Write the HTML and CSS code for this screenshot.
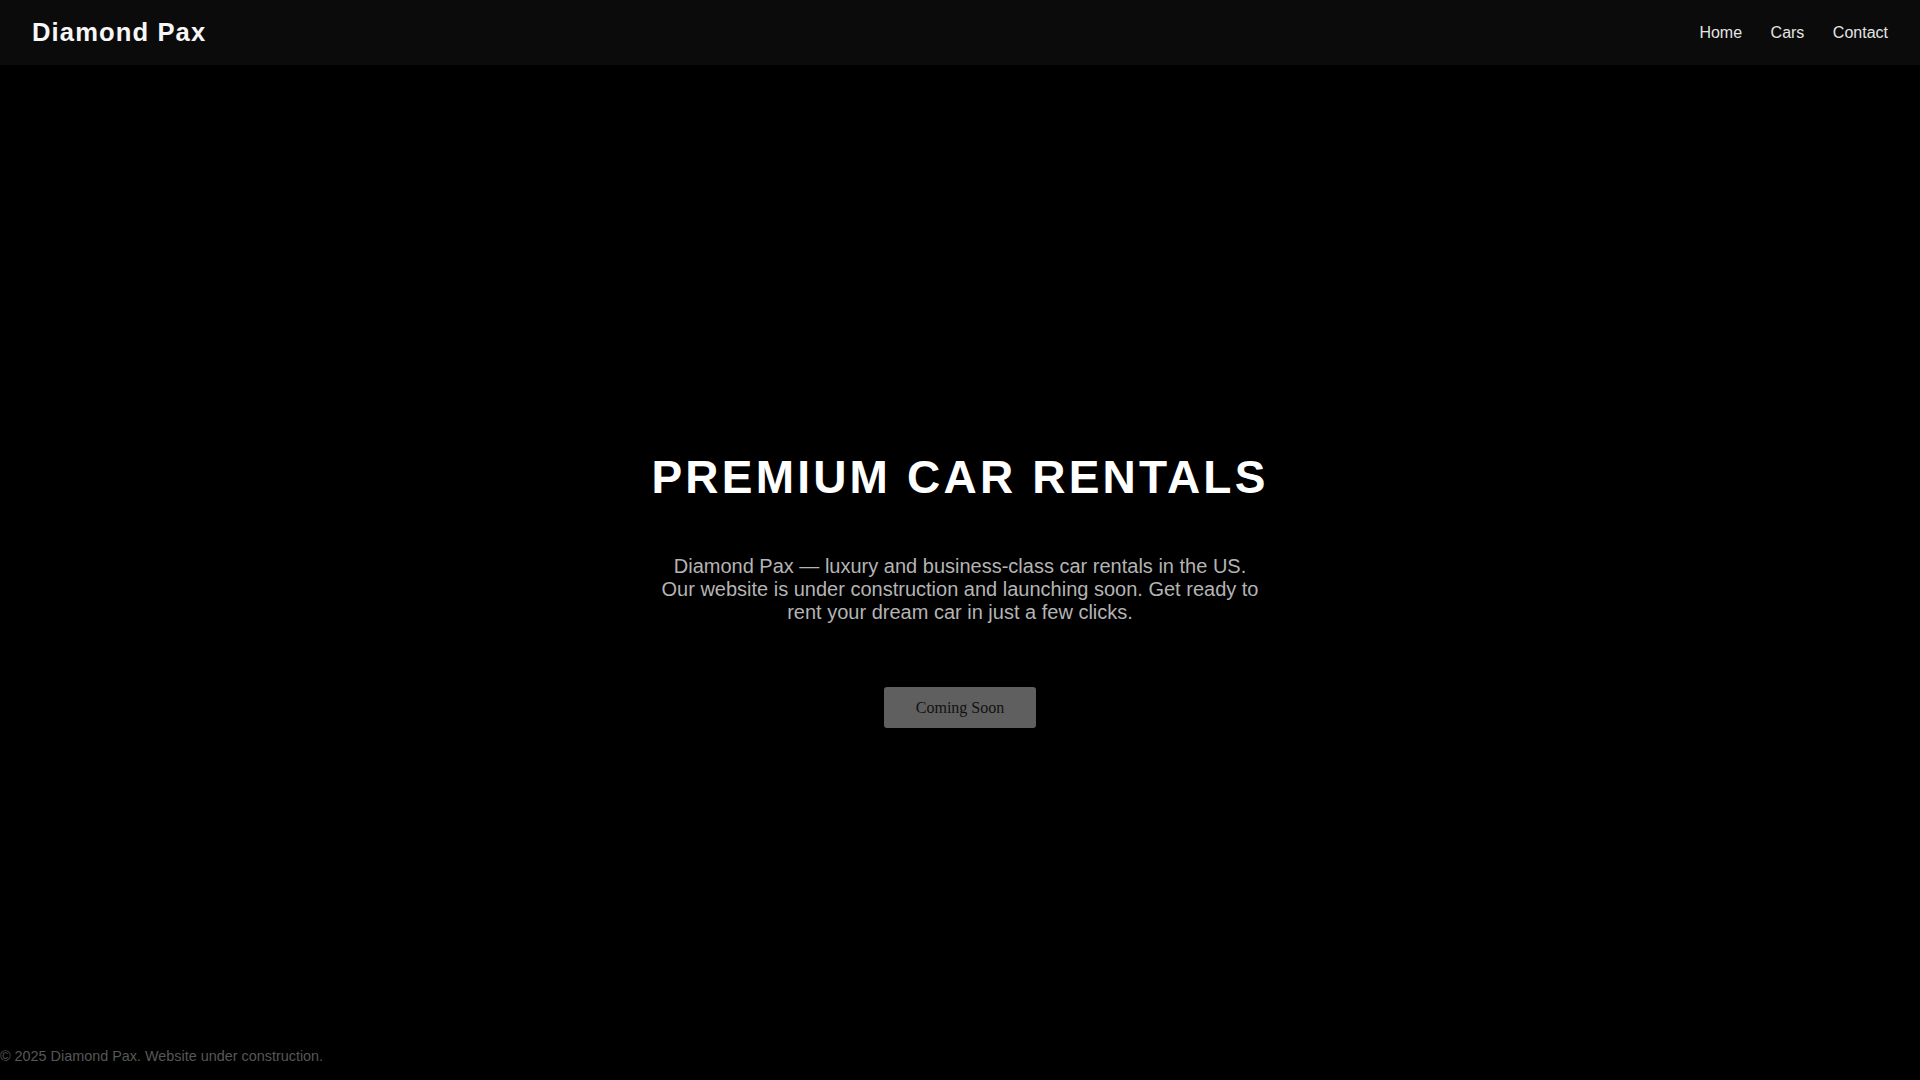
FILE: index.html
```html
<!DOCTYPE html>
<html lang="en">
<head>
<meta charset="utf-8">
<title>Diamond Pax — Premium Car Rentals</title>
<link rel="stylesheet" href="styles.css">
</head>
<body>
  <header class="site-header">
    <div class="logo">Diamond Pax</div>
    <nav class="nav">
      <a href="#" class="nav-link">Home</a>
      <a href="#" class="nav-link">Cars</a>
      <a href="#" class="nav-link">Contact</a>
    </nav>
  </header>
  <main class="hero">
    <h1 class="hero-title">PREMIUM CAR RENTALS</h1>
    <p class="hero-text">Diamond Pax — luxury and business-class car rentals in the US. Our website is under construction and launching soon. Get ready to rent your dream car in just a few clicks.</p>
    <button class="soon-btn" type="button">Coming Soon</button>
  </main>
  <footer class="site-footer">© 2025 Diamond Pax. Website under construction.</footer>
</body>
</html>
```

FILE: styles.css
```css
html, body {
  margin: 0;
  padding: 0;
}
body {
  background: #000;
  color: #fff;
  font-family: "Liberation Sans", Arial, sans-serif;
  min-height: 100vh;
  display: flex;
  flex-direction: column;
}
.site-header {
  background: #0b0b0b;
  height: 65px;
  box-sizing: border-box;
  padding: 0 32px;
  display: flex;
  align-items: center;
  justify-content: space-between;
}
.logo {
  font-size: 25.6px;
  font-weight: bold;
  letter-spacing: 1.1px;
  color: #f7f7f7;
}
.nav {
  display: flex;
  gap: 28.5px;
}
.nav-link {
  color: #e4e4e4;
  text-decoration: none;
  font-size: 16px;
}
.hero {
  flex: 1;
  display: flex;
  flex-direction: column;
  align-items: center;
  text-align: center;
  padding-top: 385px;
}
.hero-title {
  margin: 0;
  font-size: 46px;
  font-weight: bold;
  letter-spacing: 3.2px;
  color: #fff;
  line-height: normal;
}
.hero-text {
  margin: 51px 0 0;
  max-width: 600px;
  font-size: 20px;
  line-height: 23px;
  color: #b4b4b4;
}
.soon-btn {
  margin-top: 63px;
  font-family: "Liberation Serif", "Times New Roman", serif;
  font-size: 16px;
  color: #111;
  background: #5f5f5f;
  border: none;
  border-radius: 3px;
  padding: 11.5px 32px;
  line-height: normal;
}
.site-footer {
  padding: 0 0 16px;
  font-size: 14.4px;
  color: #575757;
  text-align: left;
}
```
